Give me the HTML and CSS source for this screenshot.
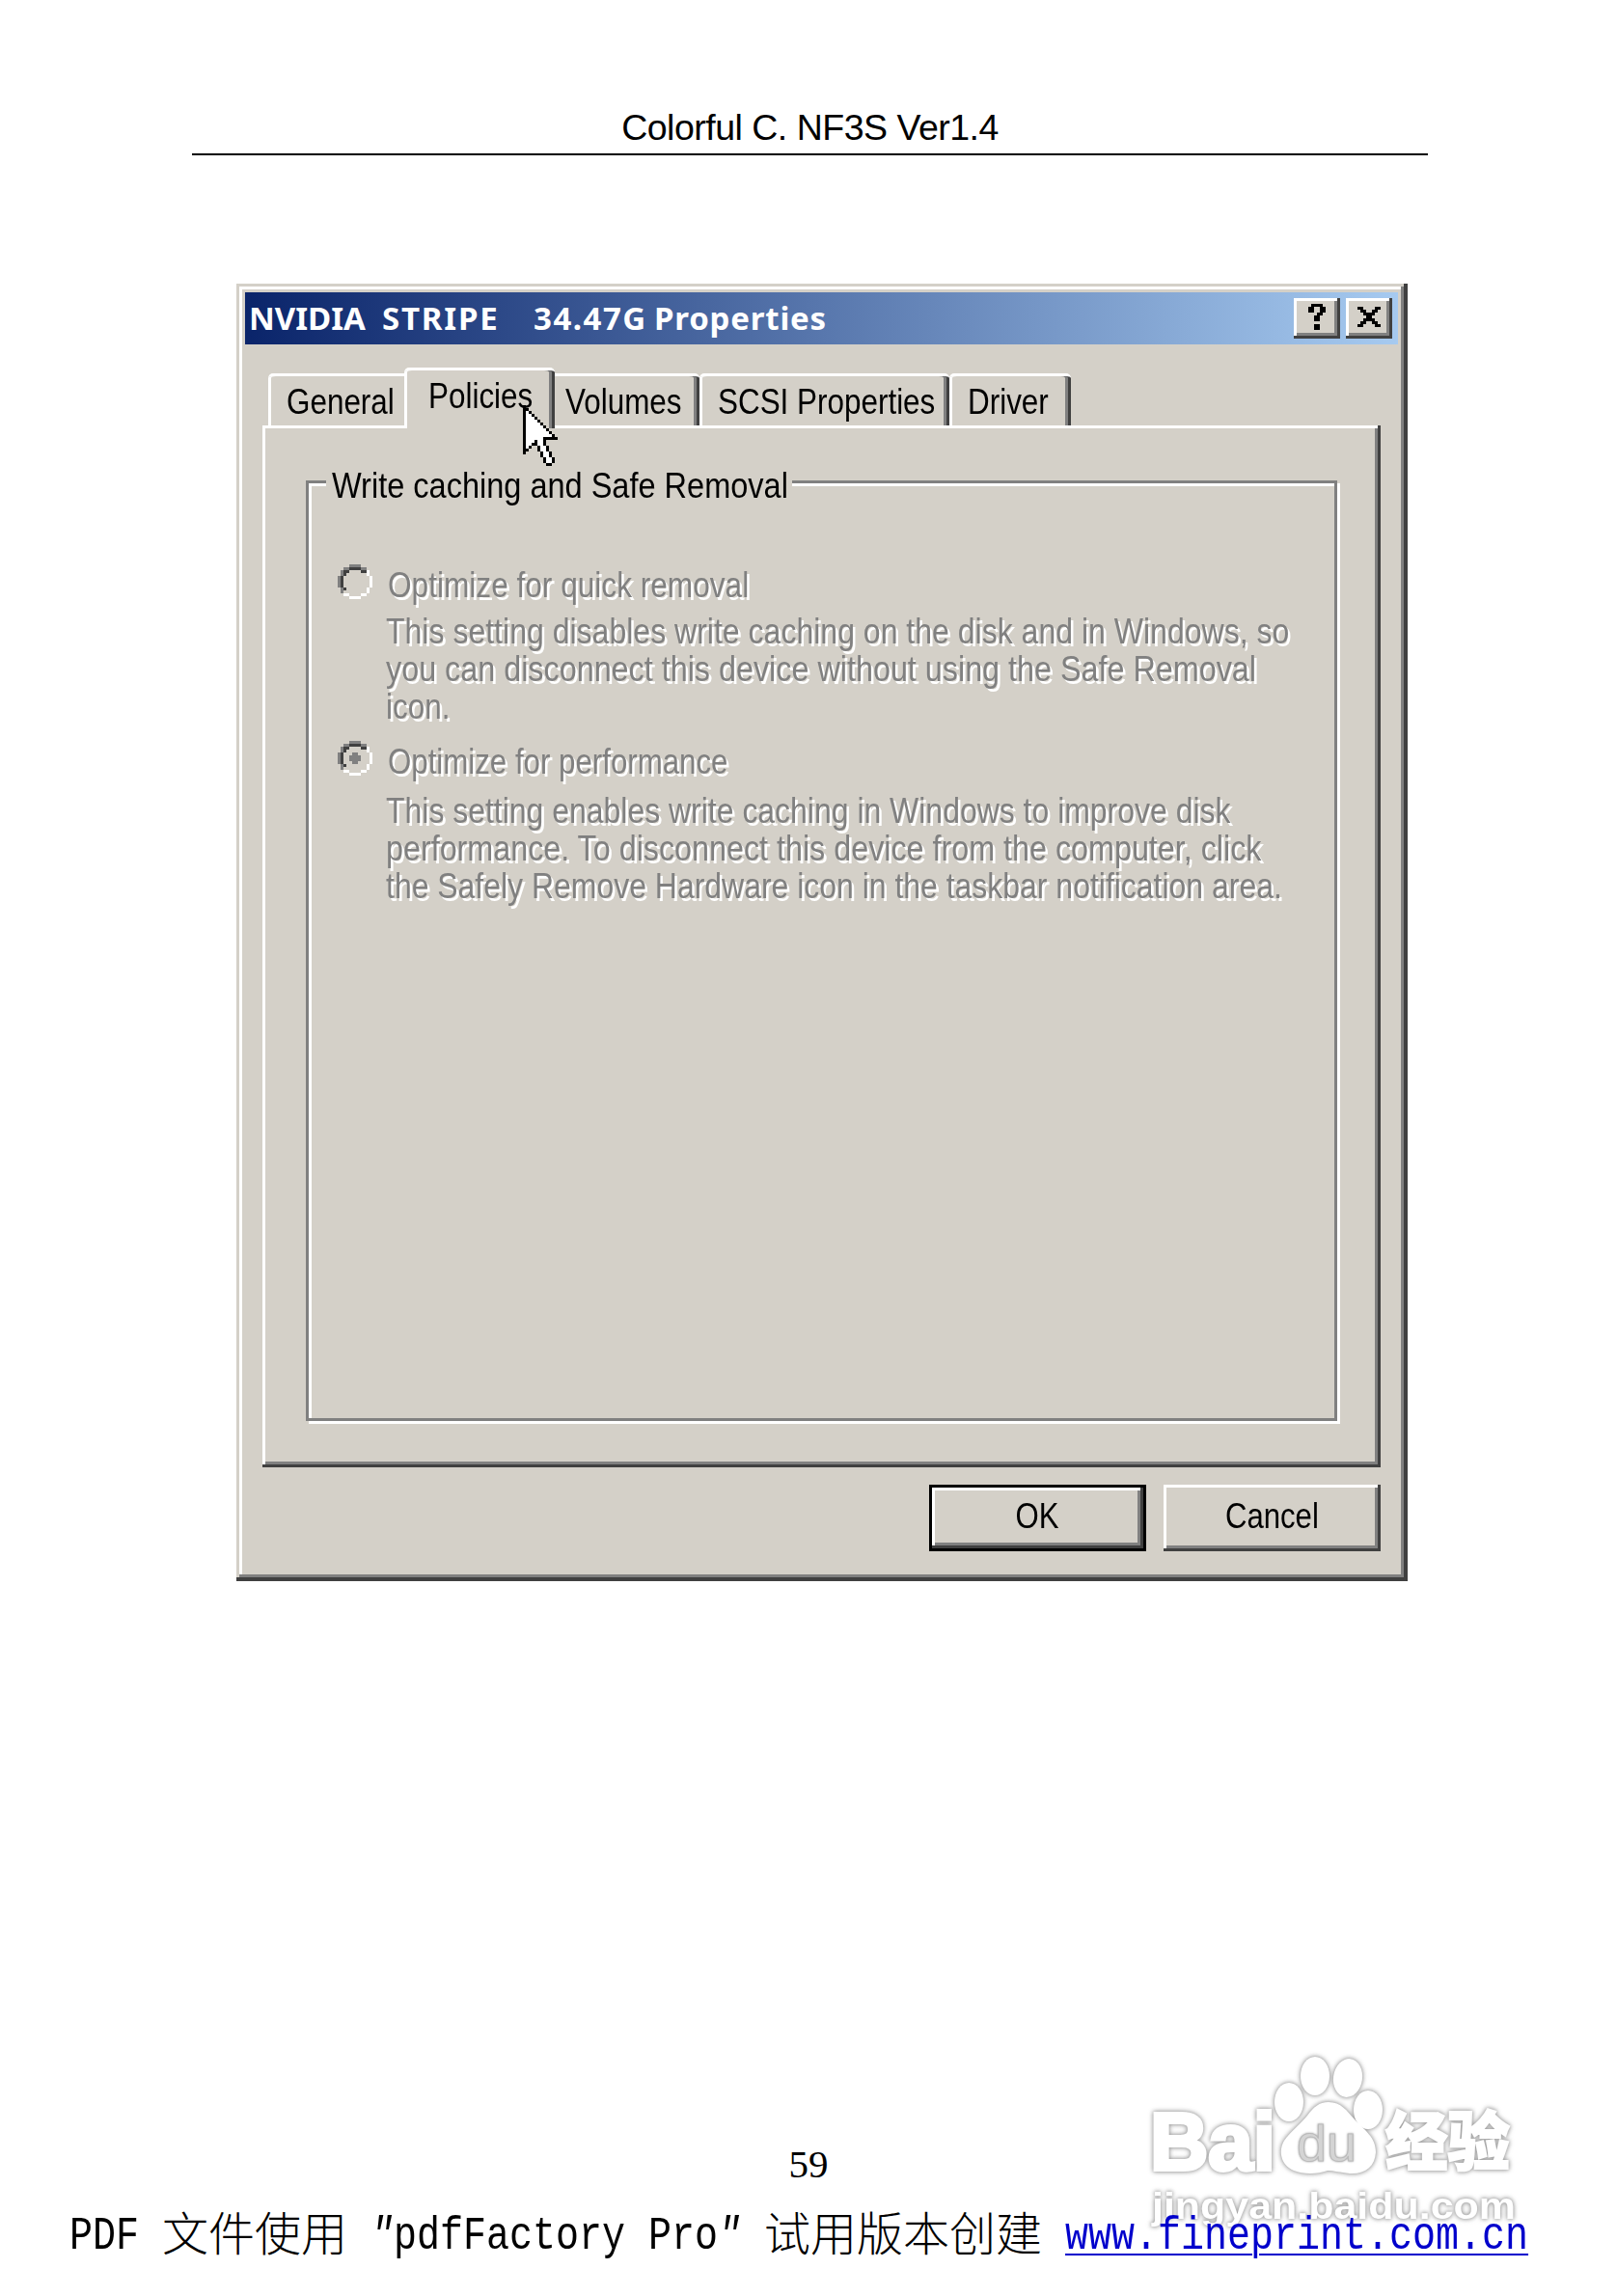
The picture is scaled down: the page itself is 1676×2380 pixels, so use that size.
FILE: index.html
```html
<!DOCTYPE html>
<html lang="zh-CN">
<head>
    <meta charset="UTF-8">
    <title>Colorful C. NF3S Ver1.4</title>
    <link rel="stylesheet" href="styles.css">
</head>
<body>
    <div class="page">
        <header class="page-header">Colorful C. NF3S Ver1.4</header>

        <div class="dialog">
            <div class="titlebar">
                <div class="title"><span class="w-nvidia">NVIDIA</span><span class="w-stripe">STRIPE</span><span class="w-size">34.47G</span><span class="w-prop">Properties</span></div>
                <div class="caption-btn">
                    <svg viewBox="0 0 16 14"><path d="M6 2h4v1h1v2h-1v1h-1v2h-2v-2h1v-1h1v-2h-2v2h-2v-2h1zM7 9h2v2h-2z"/></svg>
                </div>
                <div class="caption-btn">
                    <svg viewBox="0 0 16 14"><path d="M4 3h2v1h1v1h2v-1h1v-1h2v1h-1v1h-1v1h-1v1h1v1h1v1h1v1h-2v-1h-1v-1h-2v1h-1v1h-2v-1h1v-1h1v-1h1v-1h-1v-1h-1v-1h-1z"/></svg>
                </div>
            </div>

            <div class="tabs">
                <div class="tab t-general"><span>General</span></div>
                <div class="tab t-policies active"><span>Policies</span>
                    <svg class="cursor" viewBox="0 0 12 21">
                        <path d="M0 0h1v1h1v1h1v1h1v1h1v1h1v1h1v1h1v1h1v1h1v1h1v1H12V12H8V14H9V16H10V18H11V20H10V21H8V20H7V18H6V16H5V14H3V15H2V16H1V17H0z"/>
                        <path fill="#fff" d="M1 2h1v1h1v1h1v1h1v1h1v1h1v1h1v1h1v1h1v1H7V14H8V16H9V18H10V20H8V18H7V16H6V14H5V12H4V13H3V14H2V15H1z"/>
                    </svg>
                </div>
                <div class="tab t-volumes"><span>Volumes</span></div>
                <div class="tab t-scsi"><span>SCSI Properties</span></div>
                <div class="tab t-driver"><span>Driver</span></div>
            </div>

            <div class="panel">
                <div class="group">
                    <div class="legend"><span>Write caching and Safe Removal</span></div>

                    <div class="option">
                        <svg class="radio" viewBox="0 0 12 12">
                            <path fill="#808080" d="M4 0h4v1h-4zM2 1h2v1h-2zM8 1h2v1h-2zM1 2h1v2h-1zM0 4h1v4h-1zM1 8h1v2h-1z"/>
                            <path fill="#404040" d="M4 1h4v1h-4zM2 2h2v1h-2zM8 2h2v1h-2zM2 3h1v1h-1zM1 4h1v4h-1zM2 8h1v1h-1z"/>
                            <path fill="#fff" d="M10 2h1v2h-1zM11 4h1v4h-1zM10 8h1v2h-1zM2 10h2v1h-2zM8 10h2v1h-2zM4 11h4v1h-4z"/>
                        </svg>
                        <span class="quick">Optimize for quick removal</span>
                    </div>
                    <div class="desc d1">
                        <span class="line1">This setting disables write caching on the disk and in Windows, so</span>
                        <span class="line2">you can disconnect this device without using the Safe Removal</span>
                        <span class="line3">icon.</span>
                    </div>

                    <div class="option second">
                        <svg class="radio" viewBox="0 0 12 12">
                            <path fill="#808080" d="M4 0h4v1h-4zM2 1h2v1h-2zM8 1h2v1h-2zM1 2h1v2h-1zM0 4h1v4h-1zM1 8h1v2h-1z"/>
                            <path fill="#404040" d="M4 1h4v1h-4zM2 2h2v1h-2zM8 2h2v1h-2zM2 3h1v1h-1zM1 4h1v4h-1zM2 8h1v1h-1z"/>
                            <path fill="#fff" d="M10 2h1v2h-1zM11 4h1v4h-1zM10 8h1v2h-1zM2 10h2v1h-2zM8 10h2v1h-2zM4 11h4v1h-4z"/>
                            <path fill="#808080" d="M5 4h2v1h1v2h-1v1h-2v-1h-1v-2h1z"/>
                        </svg>
                        <span class="perf">Optimize for performance</span>
                    </div>
                    <div class="desc d2">
                        <span class="line1">This setting enables write caching in Windows to improve disk</span>
                        <span class="line2">performance. To disconnect this device from the computer, click</span>
                        <span class="line3">the Safely Remove Hardware icon in the taskbar notification area.</span>
                    </div>
                </div>
            </div>

            <div class="buttons">
                <div class="btn default"><span>OK</span></div>
                <div class="btn"><span>Cancel</span></div>
            </div>
        </div>

        <div class="page-number">59</div>

        <svg class="watermark" viewBox="0 0 400 200">
            <g class="logo">
                <text class="bai" x="7" y="124" font-size="84" textLength="130" lengthAdjust="spacingAndGlyphs">Bai</text>
                <ellipse cx="151" cy="54" rx="15" ry="20"/>
                <ellipse cx="178" cy="27" rx="15" ry="20"/>
                <ellipse cx="212" cy="29" rx="15" ry="20" transform="rotate(8 212 29)"/>
                <ellipse cx="233" cy="62" rx="15" ry="20"/>
                <path d="M192 54C205 54 211 63 219 72C229 83 241 90 241 106C240 121 230 129 214 128C204 127 198 125 191 125C180 129 166 129 156 125C142 119 140 104 146 94C152 85 163 77 170 68C177 59 182 54 192 54Z"/>
                <text x="251" y="119" font-size="66" textLength="129" lengthAdjust="spacingAndGlyphs" class="cjk">经验</text>
                <text x="9" y="175" font-size="39" textLength="377" lengthAdjust="spacingAndGlyphs">jingyan.baidu.com</text>
            </g>
            <text class="du" x="159" y="115" font-size="51" textLength="62" lengthAdjust="spacingAndGlyphs">du</text>
        </svg>

        <footer class="trial">
            <span class="latin c4">PDF </span><span class="han">文件使用</span><span class="latin c17"> <i>"</i>pdfFactory Pro<i>"</i> </span><span class="han">试用版本创建</span><span class="latin c1"> </span><a class="latin c20">www.fineprint.com.cn</a>
        </footer>
    </div>
</body>
</html>
```

FILE: styles.css
```css
body { margin: 0; background: #fff; color: #000; }
.page { position: relative; width: 1676px; height: 2380px; overflow: hidden; display: flex; flex-direction: column; }

.page-header { margin: 0 196px 0 199px; height: 161px; border-bottom: 2px solid #000; text-align: center; font: 37.5px/42px "Liberation Sans", Arial, sans-serif; letter-spacing: -0.5px; padding-top: 111px; box-sizing: border-box; }

/* dialog window */
.dialog { width: 1214px; height: 1345px; box-sizing: border-box; margin: 133px 0 0 245px; padding: 9px 10px 0 9px; background: #d4d0c8; box-shadow: inset -4px -4px #404040, inset 3px 3px #d4d0c8, inset -7px -7px #808080, inset 6px 6px #fff; font: 37.5px/39px "Liberation Sans", Arial, sans-serif; white-space: nowrap; }
.titlebar { height: 54px; display: flex; align-items: center; background: linear-gradient(90deg, #0a246a, #a6caf0); padding: 0 6px 0 4px; }
.title { flex: 1; display: flex; color: #fff; font: bold 33px/54px "Noto Sans", "Open Sans", sans-serif; }
.w-nvidia { width: 138px; }
.w-stripe { width: 157px; letter-spacing: 1.8px; }
.w-size { width: 125px; letter-spacing: 1.5px; }
.w-prop { letter-spacing: 0.8px; }
.caption-btn { width: 48px; height: 42px; margin-left: 6px; background: #d4d0c8; box-shadow: inset -3px -3px #404040, inset 3px 3px #fff, inset -6px -6px #808080; }
svg { display: block; shape-rendering: crispEdges; }

/* tabs */
.tabs { display: flex; align-items: flex-end; margin: 24px 0 0 24px; height: 60px; }
.tab { position: relative; height: 54px; box-sizing: border-box; padding: 7px 0 0 19px; background: #d4d0c8; border-top: 3px solid #fff; box-shadow: inset 3px 0 #fff, inset -3px 0 #404040, inset -6px 0 #808080; border-radius: 5px 5px 0 0; }
.t-general { width: 141px; box-shadow: inset 3px 0 #fff; border-top-right-radius: 0; }
.t-policies { width: 156px; }
.t-volumes { width: 150px; padding-left: 11px; box-shadow: inset -3px 0 #404040, inset -6px 0 #808080; border-top-left-radius: 0; }
.t-scsi { width: 259px; }
.t-driver { width: 126px; }
.tab.active { height: 63px; margin-bottom: -3px; padding-left: 25px; z-index: 1; }
.cursor { position: absolute; left: 123px; top: 36px; width: 36px; height: 63px; }

/* condensed labels */
.tab span, .legend span, .option span, .desc span { display: block; width: max-content; transform: scaleX(0.838); transform-origin: 0 0; }
.btn span { display: inline-block; transform: scaleX(0.83); }
.legend span { transform: scaleX(0.867); }
.option .quick { transform: scaleX(0.843); }
.option .perf { transform: scaleX(0.833); }
.d1 .line1 { transform: scaleX(0.854); }
.d1 .line2 { transform: scaleX(0.862); }
.d2 .line1 { transform: scaleX(0.852); }
.d2 .line2 { transform: scaleX(0.861); }
.d2 .line3 { transform: scaleX(0.852); }

/* tab page */
.panel { width: 1159px; height: 1080px; box-sizing: border-box; margin-left: 18px; padding: 57px 45px 0; box-shadow: inset -3px -3px #404040, inset 3px 3px #fff, inset -6px -6px #808080; }
.group { width: 1069px; height: 975px; box-sizing: border-box; border: 3px solid #808080; box-shadow: 3px 3px #fff, inset 3px 3px #fff; }
.legend { width: 483px; height: 39px; margin: -17px 0 0 18px; padding-left: 6px; box-sizing: border-box; background: #d4d0c8; position: relative; }
.option { display: flex; margin: 62px 0 0 30px; height: 39px; color: #808080; text-shadow: 3px 3px #fff; }
.option span { margin-left: 16px; padding-top: 2px; }
.option.second { margin-top: 17px; }
.radio { width: 36px; height: 36px; }
.desc { margin: 11px 0 0 80px; color: #808080; text-shadow: 3px 3px #fff; }
.option.second { margin-top: 16px; }
.desc.d2 { margin-top: 14px; }

.buttons { display: flex; justify-content: flex-end; gap: 18px; margin: 18px 18px 0 0; }
.btn { width: 225px; height: 69px; box-sizing: border-box; text-align: center; line-height: 65px; box-shadow: inset -3px -3px #404040, inset 3px 3px #fff, inset -6px -6px #808080; }
.btn.default { border: 3px solid #000; line-height: 59px; }

.page-number { margin-top: 581px; text-align: center; font: 41px/46px "Liberation Serif", "Times New Roman", serif; }

/* site watermark */
.watermark { position: absolute; left: 1185px; top: 2125px; width: 400px; height: 200px; shape-rendering: auto; }
.watermark text { font-family: "Liberation Sans", Arial, sans-serif; font-weight: bold; }
.watermark .cjk { font-family: "Noto Sans CJK SC", sans-serif; font-weight: 900; stroke: #fff; stroke-width: 2px; }
.watermark .bai { stroke: #fff; stroke-width: 4px; }
.logo { fill: #fff; filter: drop-shadow(0 0 2px #999) drop-shadow(0 0 2px #ccc); }
.watermark .du { fill: #d4d4d4; stroke: #bbb; stroke-width: 1px; font-weight: normal; filter: drop-shadow(0 0 1px #aaa); }

.trial { position: relative; display: flex; margin: 22px 0 0 72px; font-size: 48px; line-height: 60px; white-space: pre; }
.latin { font-family: "Liberation Mono", monospace; transform: scaleX(0.8333); transform-origin: 0 0; }
.han { font-family: "Noto Sans CJK SC", sans-serif; font-weight: 300; margin-top: -6px; }
.c1 { width: 24px; }
.c4 { width: 96px; }
.c17 { width: 432px; }
.c20 { width: 480px; color: #00c; text-decoration: underline; text-decoration-thickness: 2px; text-underline-offset: 5px; }
```
